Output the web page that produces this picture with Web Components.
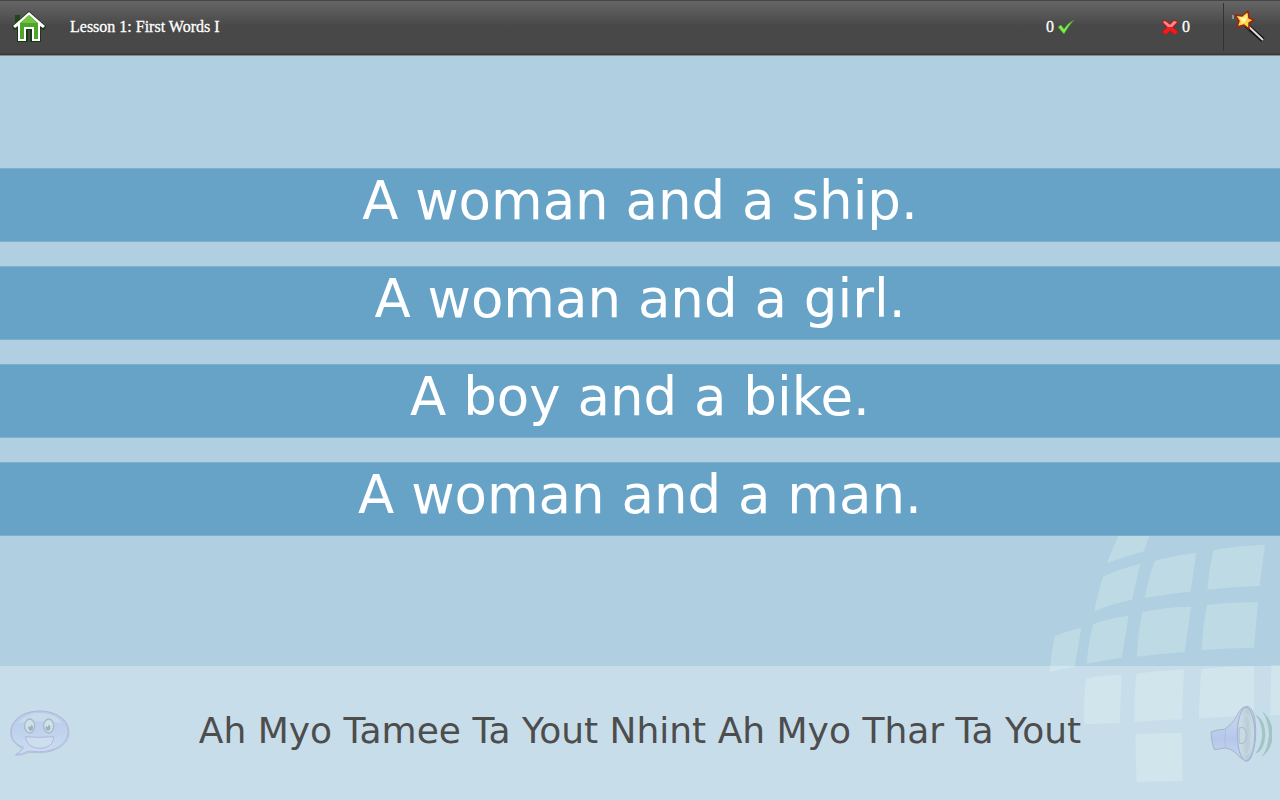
<!DOCTYPE html>
<html lang="en">
<head>
<meta charset="utf-8">
<title>Lesson 1: First Words I</title>
<style>
    html, body {
        height: 100%;
        margin: 0;
    }
</style>
</head>
<body>
<lesson-app></lesson-app>

<script>
class LessonBar extends HTMLElement {
    constructor() {
        super();
        this.attachShadow({mode: 'open'});
    }

    connectedCallback() {
        this.shadowRoot.innerHTML = `
            <style>
                :host {
                    display: flex;
                    align-items: center;
                    box-sizing: border-box;
                    height: 56px;
                    padding-bottom: 2px;
                    border-top: 1px solid #454545;
                    border-bottom: 1px solid #7e8c94;
                    background: linear-gradient(#666, #484848 46%, #484848 96%, #353535);
                    color: #fff;
                    font: 16px/20px "Liberation Serif", serif;
                }

                h1 {
                    flex: 1;
                    margin: 0;
                    padding-left: 12px;
                    font-size: 16px;
                    font-weight: normal;
                    -webkit-text-stroke: 0.3px #fff;
                }

                button {
                    display: flex;
                    align-items: center;
                    justify-content: center;
                    box-sizing: border-box;
                    height: 48px;
                    width: 58px;
                    padding: 0;
                    border: none;
                    background: none;
                    cursor: pointer;
                }

                .hint {
                    width: 57px;
                    padding-right: 6px;
                    border-left: 1px solid #333;
                }

                .scores {
                    display: flex;
                    gap: 86px;
                    padding-right: 33px;
                }
            </style>
            <button aria-label="Home">
                <svg width="36" height="34" viewBox="0 0 36 34">
                    <path d="M4 5h5v8H4z" fill="#20461c"/>
                    <path d="M18 1 1 16l2 4 3-1v13h11V20h2v12h11V19l3 1 2-4z" fill="#173a16"/>
                    <path d="M18 2 2 16l2 2 3-2v15h8V19h6v12h8V16l3 2 2-2z" fill="#fff"/>
                    <path d="M18 5 9 13v16h4V17h10v12h4V13z" fill="#4fa52b"/>
                    <path d="m18 5-8 8h7l9 0z" fill="#73c440"/>
                </svg>
            </button>
            <h1><slot></slot></h1>
            <div class="scores">
                <score-count kind="right">0</score-count>
                <score-count kind="wrong">0</score-count>
            </div>
            <button class="hint" aria-label="Hint">
                <svg width="36" height="34" viewBox="0 0 36 34">
                    <path d="M2 5v4" stroke="#b9d9e6"/>
                    <path d="m15 15 17 15" stroke="#101010" stroke-width="5"/>
                    <path d="m15 14 17 16" stroke="#ddd" stroke-width="2"/>
                    <path d="m17 1 1 7 5 2-5 3 0 6-5-4-7 2 2-6-4-6 7 1z" fill="#ffd548" stroke="#9c240b" stroke-width="1.5" stroke-linejoin="round"/>
                    <path d="m16 4-3 4-5-1 3 4-1 3 5-3z" fill="#fff6ae"/>
                </svg>
            </button>
        `;
    }
}

class ScoreCount extends HTMLElement {
    constructor() {
        super();
        this.attachShadow({mode: 'open'});
    }

    connectedCallback() {
        const right = this.getAttribute('kind') === 'right';
        const tick = `
            <svg width="18" height="16" viewBox="0 0 18 16" role="img" aria-label="correct">
                <path d="M1 8 4 6l3 4q4-6 10-9Q12 6 7 15z" fill="#7cec48" stroke="#3c9a26" stroke-width="0.5"/>
            </svg>`;
        const cross = `
            <svg width="18" height="16" viewBox="0 0 18 16" role="img" aria-label="wrong">
                <path d="m1 3 3-2 5 4 4-4 4 2-5 5 5 5-3 3-5-4-4 4-4-3 5-5z" fill="#ee1c1f" stroke="#a31215" stroke-width="0.5"/>
                <path d="m2 3 2-1 5 4 4-4 3 1-5 5H7z" fill="#f98d8d"/>
            </svg>`;
        this.shadowRoot.innerHTML = `
            <style>
                :host {
                    display: flex;
                    align-items: center;
                    gap: 3px;
                    -webkit-text-stroke: 0.3px #fff;
                }
            </style>
            ${right ? `<slot></slot>${tick}` : `${cross}<slot></slot>`}
        `;
    }
}

class AnswerOption extends HTMLElement {
    constructor() {
        super();
        this.attachShadow({mode: 'open'});
    }

    connectedCallback() {
        this.shadowRoot.innerHTML = `
            <style>
                :host {
                    display: block;
                }

                button {
                    display: block;
                    width: 100%;
                    padding: 0 0 8px;
                    border: solid #7cb0ce;
                    border-width: 1px 0;
                    background: #66a3c7;
                    color: #fff;
                    font: 53px/64px "DejaVu Sans", sans-serif;
                    cursor: pointer;
                }
            </style>
            <button><slot></slot></button>
        `;
    }
}

// tiles of the globe in the lower right corner
class GlobeArt extends HTMLElement {
    constructor() {
        super();
        this.attachShadow({mode: 'open'});
    }

    connectedCallback() {
        this.shadowRoot.innerHTML = `
            <style>
                :host {
                    display: block;
                }

                svg {
                    display: block;
                }
            </style>
            <svg width="250" height="280" viewBox="0 0 750 840" fill="#bddae5" aria-hidden="true">
                <path d="M230 130 266 45 280 20 370 8 342 94Q280 112 230 130z"/>
                <path d="M193 274Q203 218 219 171 250 152 331 131L306 239Q245 252 193 274z"/>
                <path d="M344 234Q356 172 374 123 415 109 499 98L482 215Q420 220 344 234z"/>
                <path d="M532 209Q538 145 550 91 600 79 705 74L689 198Q610 200 532 209z"/>
                <path d="M59 456Q63 400 74 349 105 335 154 323L134 441Q92 447 59 456z"/>
                <path d="M170 431Q176 362 189 313 230 295 296 287L275 413Q225 420 170 431z"/>
                <path d="M320 410Q324 335 337 277 390 262 483 260L464 397Q392 401 320 410z"/>
                <path d="M515 391Q518 315 531 255 580 248 684 246L672 383Q595 384 515 391z"/>
                <path d="M162 613Q160 530 169 477 190 468 275 464L269 609Q215 610 162 613z"/>
                <path d="M313 606Q312 520 320 462 370 453 462 448L455 598Q384 600 313 606z"/>
                <path d="M507 595Q508 510 515 447 590 439 672 439V588Q590 589 507 595z"/>
                <path d="M721 586 724 436 750 434V585z"/>
                <path d="M320 786Q316 710 317 643 370 640 455 639L457 783Q385 783 320 786z"/>
            </svg>
        `;
    }
}

class PhraseBar extends HTMLElement {
    constructor() {
        super();
        this.attachShadow({mode: 'open'});
    }

    connectedCallback() {
        this.shadowRoot.innerHTML = `
            <style>
                :host {
                    display: flex;
                    align-items: center;
                    box-sizing: border-box;
                    min-height: 134px;
                    padding: 0 8px;
                    background: rgba(255, 255, 255, 0.3);
                }

                p {
                    flex: 1;
                    margin: 0;
                    padding-bottom: 4px;
                    color: #4d4d4d;
                    text-align: center;
                    font: 36px/44px "DejaVu Sans", sans-serif;
                }

                button {
                    display: flex;
                    padding: 0;
                    border: none;
                    background: none;
                    cursor: pointer;
                }
            </style>
            <button aria-label="Show phrase">
                <svg width="64" height="60" viewBox="0 0 192 180">
                    <defs>
                        <linearGradient id="bubble" x2="0" y2="1">
                            <stop offset="0" stop-color="#b6cbe6"/>
                            <stop offset="0.5" stop-color="#bfd3ee"/>
                            <stop offset="1" stop-color="#cbdff0"/>
                        </linearGradient>
                    </defs>
                    <path d="M95 25C144 25 183 50 183 87 183 125 143 148 95 149 79 149 62 146 51 152 42 156 32 157 22 156 34 150 41 143 44 136 20 126 8 109 8 89 8 50 45 25 95 25z" fill="none" stroke="#b0c2d0" stroke-width="3"/>
                    <path d="M95 24C142 24 180 50 180 86 180 122 142 145 95 146 78 146 62 142 49 149 42 153 34 154 24 154 37 147 43 140 47 133 20 124 10 106 10 87 10 50 48 24 95 24z" fill="url(#bubble)" stroke="#b5b5e2" stroke-width="3"/>
                    <path d="M30 61C46 36 75 29 97 30 126 30 152 42 162 61 130 53 60 53 30 61z" fill="#c6dcea"/>
                    <ellipse cx="65" cy="69" rx="15" ry="21" fill="#cfe1ea" stroke="#a5bbc8" stroke-width="4"/>
                    <ellipse cx="122" cy="69" rx="15" ry="21" fill="#cfe1ea" stroke="#a5bbc8" stroke-width="4"/>
                    <ellipse cx="68" cy="74" rx="7" ry="9" fill="#9bb2be"/>
                    <ellipse cx="120" cy="74" rx="7" ry="9" fill="#9bb2be"/>
                    <circle cx="66" cy="68" r="3" fill="#dce8f0"/>
                    <circle cx="118" cy="68" r="3" fill="#dce8f0"/>
                    <path d="M53 101Q95 105 137 101C137 124 119 136 96 136 73 136 54 124 53 101z" fill="#cbe0ec" stroke="#b6b3e1" stroke-width="3"/>
                </svg>
            </button>
            <p><slot></slot></p>
            <button aria-label="Play sound">
                <svg width="64" height="60" viewBox="0 0 192 180">
                    <defs>
                        <linearGradient id="horn" x2="0" y2="1">
                            <stop offset="0" stop-color="#cbdce9"/>
                            <stop offset="0.6" stop-color="#b5c8ec"/>
                            <stop offset="1" stop-color="#c7d6ee"/>
                        </linearGradient>
                        <linearGradient id="cone">
                            <stop offset="0" stop-color="#d1e0e9"/>
                            <stop offset="0.6" stop-color="#b9ced9"/>
                            <stop offset="1" stop-color="#cfdfe7"/>
                        </linearGradient>
                    </defs>
                    <g transform="translate(0 4)">
                        <path d="M9 83Q28 75 49 75 72 61 88 32 99 8 116 6 135 7 141 48 148 105 133 150 126 171 115 171 97 163 82 145 70 134 53 131L19 136Q9 112 9 83z" fill="url(#horn)" stroke="#a3b5c6" stroke-width="3"/>
                        <path d="M53 75Q48 105 53 131" fill="none" stroke="#acbfdc" stroke-width="3"/>
                        <ellipse cx="114" cy="89" rx="26" ry="80" fill="url(#cone)" stroke="#a4b9d9" stroke-width="4"/>
                        <ellipse cx="113" cy="91" rx="19" ry="60" fill="none" stroke="#c8dae2" stroke-width="3"/>
                        <path d="M93 71Q114 63 115 93 113 125 93 116z" fill="#c9dae5" stroke="#a5bac8" stroke-width="3"/>
                        <path d="M142 32Q170 42 172 91 169 139 142 148 160 125 163 90 161 52 142 32z" fill="#a0c5c2"/>
                        <path d="M162 20Q194 46 194 91 193 136 161 158 180 132 183 91 181 48 162 20z" fill="#a0c5c2"/>
                    </g>
                </svg>
            </button>
        `;
    }
}

class LessonApp extends HTMLElement {
    constructor() {
        super();
        this.attachShadow({mode: 'open'});
    }

    connectedCallback() {
        this.shadowRoot.innerHTML = `
            <style>
                :host {
                    position: relative;
                    display: flex;
                    flex-direction: column;
                    min-height: 100%;
                    background: #b0cfe1;
                    overflow: hidden;
                }

                globe-art {
                    position: absolute;
                    right: 0;
                    bottom: 0;
                }

                main {
                    position: relative;
                    flex: 1;
                    display: flex;
                    flex-direction: column;
                    justify-content: center;
                    gap: 24px;
                    padding-bottom: 18px;
                }

                phrase-bar {
                    position: relative;
                }
            </style>
            <globe-art></globe-art>
            <lesson-bar>Lesson 1: First Words I</lesson-bar>
            <main>
                <answer-option>A woman and a ship.</answer-option>
                <answer-option>A woman and a girl.</answer-option>
                <answer-option>A boy and a bike.</answer-option>
                <answer-option>A woman and a man.</answer-option>
            </main>
            <phrase-bar>Ah Myo Tamee Ta Yout Nhint Ah Myo Thar Ta Yout</phrase-bar>
        `;
    }
}

customElements.define('score-count', ScoreCount);
customElements.define('lesson-bar', LessonBar);
customElements.define('answer-option', AnswerOption);
customElements.define('globe-art', GlobeArt);
customElements.define('phrase-bar', PhraseBar);
customElements.define('lesson-app', LessonApp);
</script>
</body>
</html>
